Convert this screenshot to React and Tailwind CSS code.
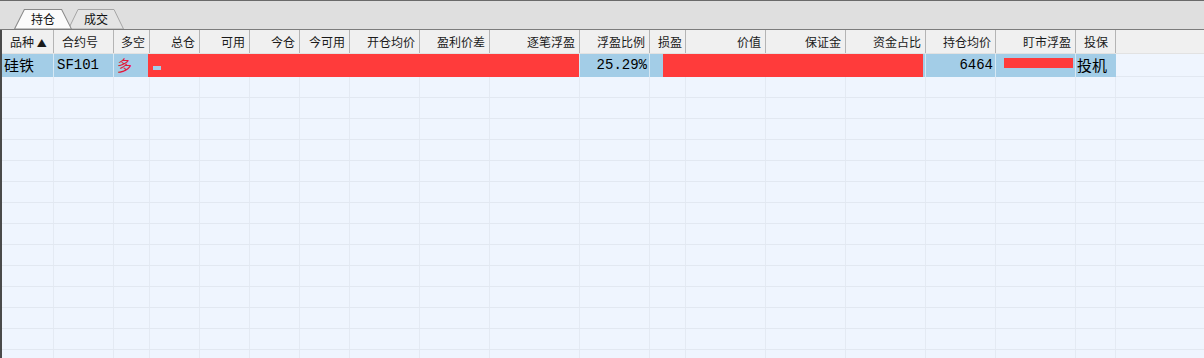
import React from 'react';

const cols = [
    { name: '品种 ▲', align: 'left' },
    { name: '合约号', align: 'left' },
    { name: '多空', align: 'right' },
    { name: '总仓', align: 'right' },
    { name: '可用', align: 'right' },
    { name: '今仓', align: 'right' },
    { name: '今可用', align: 'right' },
    { name: '开仓均价', align: 'right' },
    { name: '盈利价差', align: 'right' },
    { name: '逐笔浮盈', align: 'right' },
    { name: '浮盈比例', align: 'right' },
    { name: '损盈', align: 'left' },
    { name: '价值', align: 'right' },
    { name: '保证金', align: 'right' },
    { name: '资金占比', align: 'right' },
    { name: '持仓均价', align: 'right' },
    { name: '盯市浮盈', align: 'right' },
    { name: '投保', align: 'left' },
];

// first column is 2px narrower because of the frame's left border
const gridCols =
    'grid grid-cols-[52px_60px_36px_50px_50px_50px_50px_70px_70px_90px_70px_36px_80px_80px_80px_70px_80px_40px]';

const cjk = "font-['SimSun','Noto_Sans_CJK_SC',sans-serif]";
const mono = "font-['Liberation_Mono','Noto_Sans_CJK_SC',monospace]";

const Tab = ({ label, active, className }) => (
    <div className={`relative h-[20px] ${className}`}>
        <svg className="absolute inset-0 w-full h-full" viewBox="0 0 56 20" preserveAspectRatio="none">
            <polygon
                points="0.5,20 10,0.5 46,0.5 55.5,20"
                fill={active ? '#fbfbfb' : '#e4e4e4'}
                stroke={active ? '#8a8a8a' : '#a5a5a5'}
                strokeWidth="1"
            />
        </svg>
        <span className={`relative flex h-full items-center justify-center text-[12px] text-[#111] ${cjk}`}>
            {label}
        </span>
    </div>
);

const App = () => {
    const emptyRows = Array.from({ length: 14 });

    return (
        <div className="w-[1204px] h-[358px] overflow-hidden bg-[#eff5fe]">
            {/* tab strip */}
            <div className="h-[30px] bg-[#dfdfdf] border-t border-[#6a6a6a] border-b border-b-[#7c7c7c] flex items-end pl-[14px]">
                <Tab label="成交" className="w-[56px] order-2 -ml-[4px] mt-[1px]" />
                <Tab label="持仓" active className="w-[58px] order-1 z-10" />
            </div>

            <div className="border-l-2 border-[#4a4a4a] h-full">
                {/* header */}
                <div className="bg-[#f0f0f0] h-[24px] border-b border-[#e2e2e2]">
                    <div className={`${gridCols} h-full`}>
                        {cols.map((c, i) => (
                            <div
                                key={i}
                                className={`h-full flex items-center border-r border-[#b4b4b4] text-[12px] text-[#1a1a1a] ${cjk} ${
                                    c.align === 'left' ? 'justify-start pl-[8px]' : 'justify-end pr-[4px]'
                                } ${i === 0 ? 'pl-[6px]' : ''} ${i === 11 ? 'pl-[4px]' : ''} ${i === 17 ? 'pl-[2px]' : ''}`}
                            >
                                {i === 0 ? (
                                    <span>
                                        品种 <span className="text-[10px]">▲</span>
                                    </span>
                                ) : (
                                    c.name
                                )}
                            </div>
                        ))}
                    </div>
                </div>

                {/* selected data row */}
                <div className="relative h-[22px]">
                    <div className={`${gridCols} h-full`}>
                        <div className={`bg-[#a3cde7] border-r border-[#d6e8f4] flex items-center pl-[2px] text-[15px] text-black ${cjk}`}>硅铁</div>
                        <div className={`bg-[#a3cde7] border-r border-[#d6e8f4] flex items-center pl-[3px] text-[14px] text-black ${mono}`}>SF101</div>
                        <div className={`bg-[#a3cde7] border-r border-[#d6e8f4] flex items-center pl-[3px] text-[15px] text-[#e0193a] ${cjk}`}>多</div>
                        <div className="bg-[#a3cde7] border-r border-[#d6e8f4]" />
                        <div className="bg-[#a3cde7] border-r border-[#d6e8f4]" />
                        <div className="bg-[#a3cde7] border-r border-[#d6e8f4]" />
                        <div className="bg-[#a3cde7] border-r border-[#d6e8f4]" />
                        <div className="bg-[#a3cde7] border-r border-[#d6e8f4]" />
                        <div className="bg-[#a3cde7] border-r border-[#d6e8f4]" />
                        <div className="bg-[#a3cde7] border-r border-[#d6e8f4]" />
                        <div className={`bg-[#a3cde7] border-r border-[#d6e8f4] flex items-center justify-end pr-[2px] text-[14px] text-black ${mono}`}>25.29%</div>
                        <div className="bg-[#a3cde7] border-r border-[#d6e8f4]" />
                        <div className="bg-[#a3cde7] border-r border-[#d6e8f4]" />
                        <div className="bg-[#a3cde7] border-r border-[#d6e8f4]" />
                        <div className="bg-[#a3cde7] border-r border-[#d6e8f4]" />
                        <div className={`bg-[#a3cde7] border-r border-[#d6e8f4] flex items-center justify-end pr-[2px] text-[14px] text-black ${mono}`}>6464</div>
                        <div className="bg-[#a3cde7] border-r border-[#d6e8f4]" />
                        <div className={`bg-[#a3cde7] flex items-center pl-[1px] text-[15px] text-black ${cjk}`}>投机</div>
                    </div>

                    {/* redacted blocks */}
                    <div className="absolute left-[146px] top-0 w-[431px] h-[23px] bg-[#ff3b3b]">
                        <div className="absolute left-[5px] top-[12px] w-[8px] h-[4px] bg-[#a3cde7]" />
                    </div>
                    <div className="absolute left-[661px] top-0 w-[260px] h-[23px] bg-[#ff3b3b]" />
                    <div className="absolute left-[1002px] top-[4px] w-[69px] h-[10px] bg-[#ff3b3b]" />
                </div>

                {/* empty rows */}
                {emptyRows.map((_, r) => (
                    <div key={r} className="h-[21px] border-t border-[#e2e8f1]">
                        <div className={`${gridCols} h-full`}>
                            {cols.map((c, i) => (
                                <div key={i} className="h-full border-r border-[#e4eaf3]" />
                            ))}
                        </div>
                    </div>
                ))}
            </div>
        </div>
    );
};

export default App;
